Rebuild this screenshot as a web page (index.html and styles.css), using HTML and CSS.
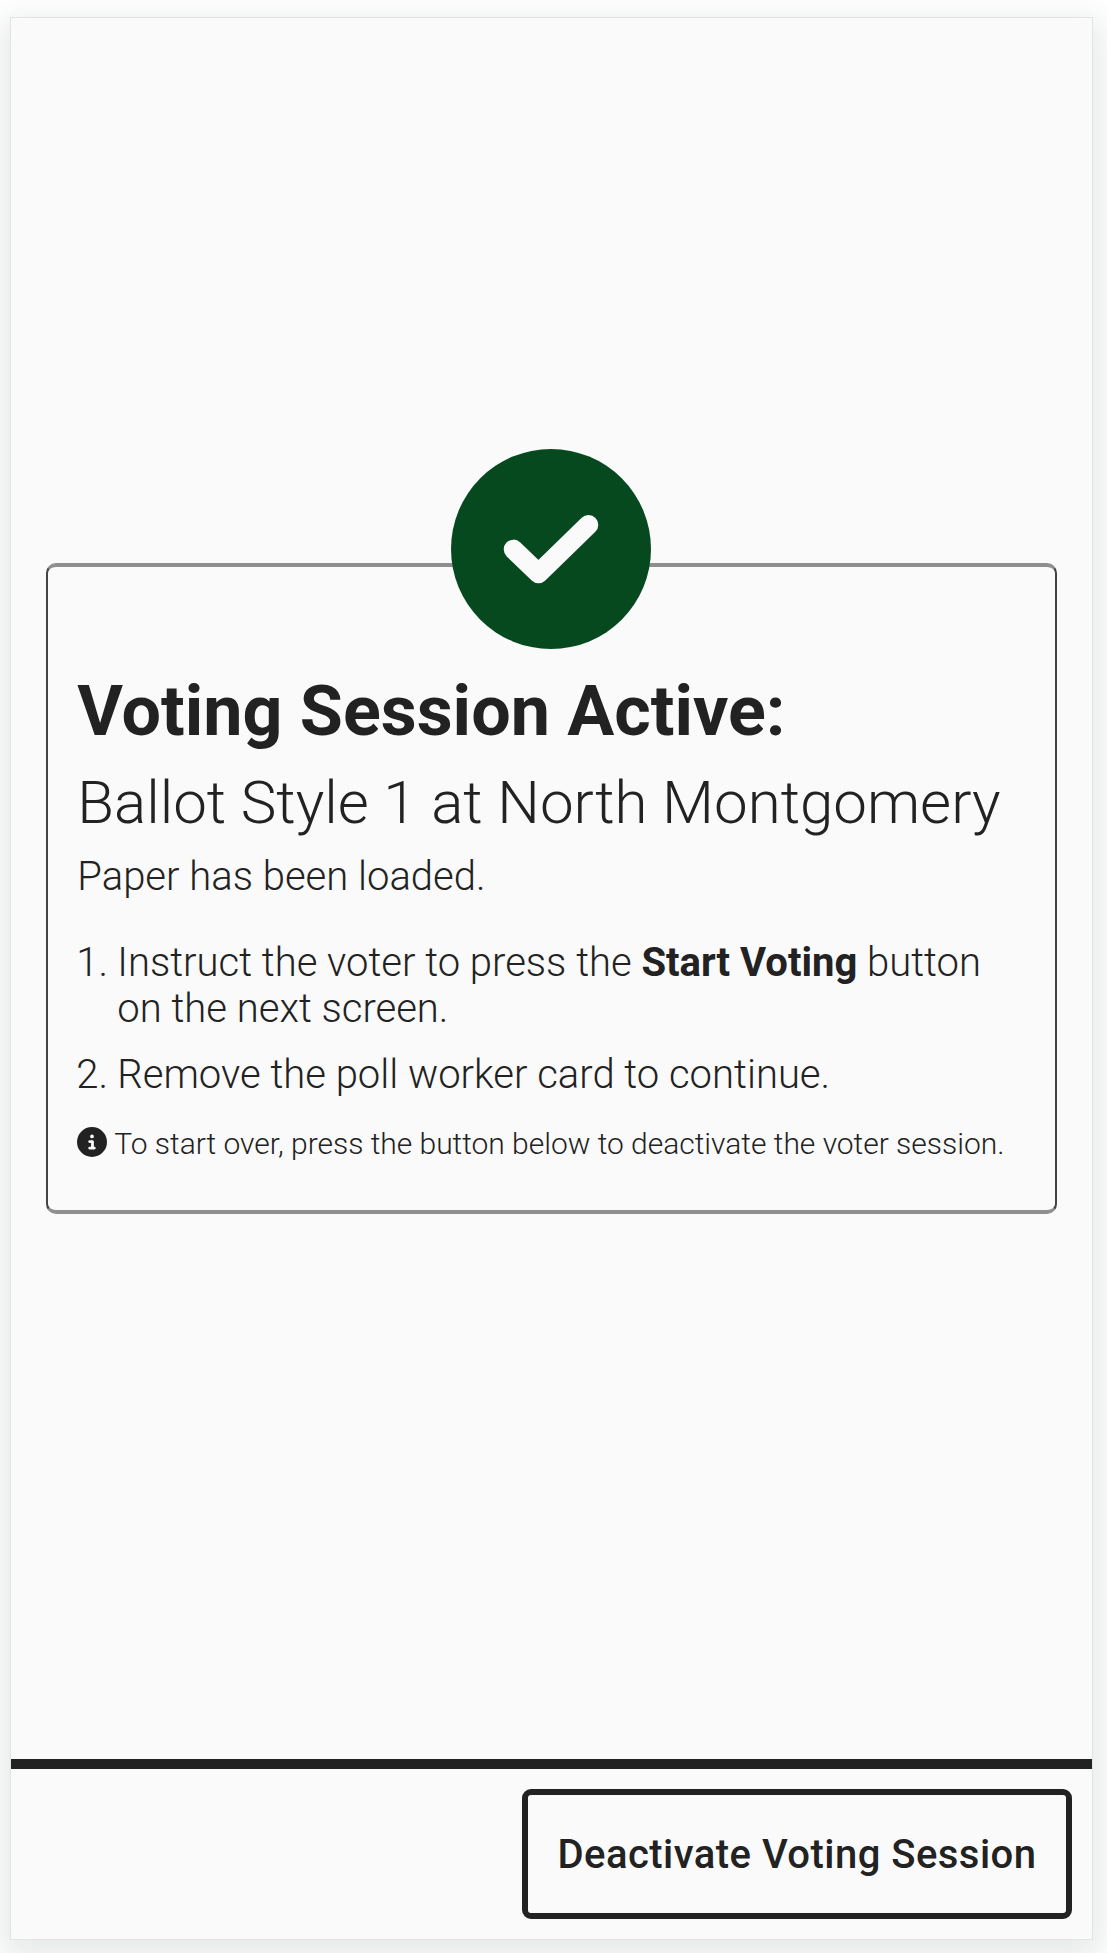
FILE: index.html
```html
<!DOCTYPE html>
<html lang="en">
<head>
<meta charset="utf-8">
<title>Voting Session</title>
<link rel="stylesheet" href="styles.css">
</head>
<body>
<div class="screen">
  <main class="main">
    <section class="card">
      <svg class="status-icon" viewBox="0 0 512 512" aria-hidden="true"><circle cx="256" cy="256" r="256" fill="#07491f"/><path d="M160 257l64 62L352 194" fill="none" stroke="#fafafa" stroke-width="50" stroke-linecap="round" stroke-linejoin="round"/></svg>
      <h1 class="title">Voting Session Active:</h1>
      <h2 class="ballot">Ballot Style 1 at North Montgomery</h2>
      <p class="paper">Paper has been loaded.</p>
      <ol class="steps">
        <li class="step"><span class="num">1.</span><span>Instruct the voter to press the <b>Start Voting</b> button on the next screen.</span></li>
        <li class="step"><span class="num">2.</span><span>Remove the poll worker card to continue.</span></li>
      </ol>
      <p class="note"><svg class="info-icon" viewBox="0 0 512 512" aria-hidden="true"><path fill="#222" d="M256 512A256 256 0 1 0 256 0a256 256 0 1 0 0 512zM216 336h24V272H216c-13.300 0-24-10.700-24-24s10.700-24 24-24h48c13.300 0 24 10.700 24 24v88h8c13.300 0 24 10.700 24 24s-10.700 24-24 24H216c-13.300 0-24-10.700-24-24s10.700-24 24-24zm40-208a32 32 0 1 1 0 64 32 32 0 1 1 0-64z"/></svg>To start over, press the button below to deactivate the voter session.</p>
    </section>
  </main>
  <footer class="footer"><button class="button">Deactivate Voting Session</button></footer>
</div>
</body>
</html>
```
FILE: styles.css
```css
* { box-sizing: border-box; }
html { background: #fff; }
body {
  margin: 0;
  padding: 17px 14px 13px 10px;
  height: 1953px;
  overflow: hidden;
  font: 300 40px/1.15 Roboto, sans-serif;
  color: #222;
}
.screen {
  height: 1923px;
  display: flex;
  flex-direction: column;
  background: #fafafa;
  border: 1px solid #e2e4e4;
  box-shadow: 0 10px 30px 8px rgba(30, 60, 50, .11);
}
.main {
  flex: 1;
  display: flex;
  flex-direction: column;
  padding: 545px 35px 0;
}
.card {
  position: relative;
  height: 651px;
  padding: 104px 26px 0 29.300px;
  border: solid;
  border-width: 4px 2px;
  border-color: #8f8f8f #444;
  border-radius: 10px;
}
.status-icon {
  position: absolute;
  left: calc(50% - .500px);
  top: -118px;
  width: 200px;
  height: 200px;
  transform: translateX(-50%);
}
.title, .ballot, .paper, .steps, .note { margin: 0; }
.title { font-size: 70px; font-weight: 700; }
.ballot { font-size: 60px; font-weight: 300; margin-top: 16px; }
.paper { margin-top: 17.500px; }
.steps {
  list-style: none;
  padding: 0;
  margin-top: 40px;
  display: flex;
  flex-direction: column;
  gap: 20px;
}
.step { display: flex; gap: 11px; }
.num { flex: none; width: 30px; margin-left: -1px; }
.step b { font-weight: 700; }
.note {
  display: flex;
  gap: 7px;
  font-size: 30px;
  letter-spacing: -.020px;
  margin-top: 29px;
  white-space: nowrap;
}
.info-icon { width: 30px; height: 30px; }
.footer {
  height: 180px;
  display: flex;
  justify-content: flex-end;
  align-items: flex-start;
  padding: 20px 20px 0;
  border-top: 10px solid #222;
}
.button {
  height: 130px;
  padding: 1px 29.500px 0;
  border: 6px solid #222;
  border-radius: 9px;
  background: #fafafa;
  color: #222;
  font: 500 40px/1.15 Roboto, sans-serif;
  letter-spacing: .470px;
  white-space: nowrap;
}
```
